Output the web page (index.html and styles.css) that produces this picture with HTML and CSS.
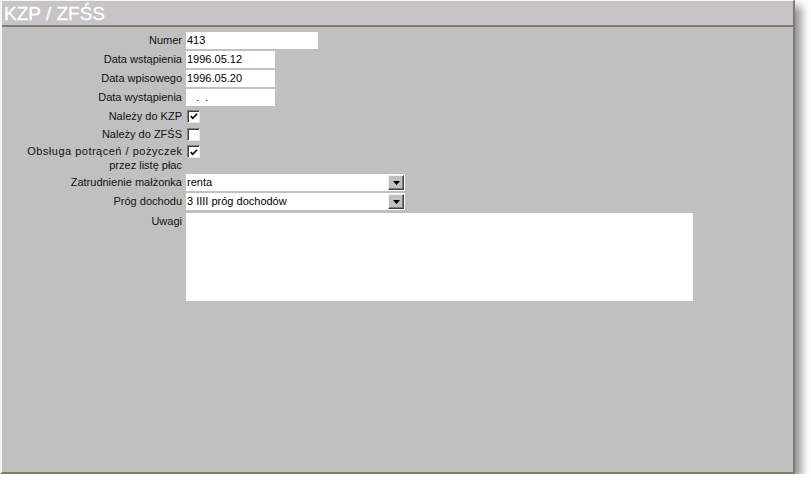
FILE: index.html
```html
<!DOCTYPE html>
<html lang="pl">
<head>
<meta charset="utf-8">
<title>KZP / ZFŚS</title>
<link rel="stylesheet" href="styles.css">
</head>
<body>
<div class="window">
  <div class="titlebar">KZP / ZFŚS</div>
  <div class="form">
    <div class="label">Numer</div>
    <div class="field w-num">413</div>

    <div class="label">Data wstąpienia</div>
    <div class="field w-date">1996.05.12</div>

    <div class="label">Data wpisowego</div>
    <div class="field w-date">1996.05.20</div>

    <div class="label">Data wystąpienia</div>
    <div class="field w-date empty">&nbsp;&nbsp;&nbsp;.&nbsp;&nbsp;.</div>

    <div class="label cb-label">Należy do KZP</div>
    <div class="cb-cell"><span class="cb"><svg viewBox="0 0 11 11" width="11" height="11"><path d="M2 5 L4 7.5 L9 2.5" fill="none" stroke="#000" stroke-width="1.8"/></svg></span></div>

    <div class="label cb-label">Należy do ZFŚS</div>
    <div class="cb-cell"><span class="cb"></span></div>

    <div class="label two"><span class="wide">Obsługa potrąceń / pożyczek</span><br>przez listę płac</div>
    <div class="cb-cell top"><span class="cb"><svg viewBox="0 0 11 11" width="11" height="11"><path d="M2 5 L4 7.5 L9 2.5" fill="none" stroke="#000" stroke-width="1.8"/></svg></span></div>

    <div class="label">Zatrudnienie małżonka</div>
    <div class="field select"><span class="val">renta</span><span class="btn"><svg viewBox="0 0 7 4" width="7" height="4"><path d="M0 0 H7 L3.5 4 Z" fill="#000"/></svg></span></div>

    <div class="label">Próg dochodu</div>
    <div class="field select"><span class="val">3 IIII próg dochodów</span><span class="btn"><svg viewBox="0 0 7 4" width="7" height="4"><path d="M0 0 H7 L3.5 4 Z" fill="#000"/></svg></span></div>

    <div class="label uwagi">Uwagi</div>
    <div class="field memo"></div>
  </div>
</div>
</body>
</html>
```

FILE: styles.css
```css
html, body {
  margin: 0;
  padding: 0;
  background: #ffffff;
}
body {
  font-family: "Liberation Sans", Arial, sans-serif;
  font-size: 11px;
  color: #000;
}
.window {
  width: 791px;
  height: 471px;
  background: #c0c0c0;
  border-left: 2px solid #f4f4f0;
  border-top: 1px solid #f4f4f0;
  border-right: 2px solid #7f7c6e;
  border-bottom: 2px solid #7f7c6e;
  box-shadow: 6px 6px 9px rgba(0, 0, 0, 0.45);
}
.titlebar {
  height: 24px;
  background: #c6c4c6;
  border-bottom: 2px solid #7f7c6e;
  color: #ffffff;
  font-size: 19px;
  line-height: 25px;
  padding-left: 2px;
  -webkit-text-stroke: 0.3px #ffffff;
}
.form {
  display: grid;
  grid-template-columns: 180px 1fr;
  column-gap: 4px;
  row-gap: 2px;
  padding-top: 5px;
  grid-template-rows: 17px 17px 17px 17px 16px 16px 28px 17px 17px 88px;
}
.label {
  text-align: right;
  line-height: 17px;
  white-space: nowrap;
  color: #111;
}
.cb-label {
  line-height: 16px;
}
.label.two {
  line-height: 14px;
}
.wide {
  letter-spacing: 0.5px;
  margin-right: -0.5px;
}
.label.uwagi {
  margin-top: 1px;
}
.field {
  background: #ffffff;
  line-height: 17px;
  padding-left: 1px;
  box-sizing: border-box;
  height: 17px;
}
.w-num { width: 132px; }
.w-date { width: 89px; }
.cb-cell {
  display: flex;
  align-items: center;
  padding-left: 1px;
}
.cb-cell.top {
  align-items: flex-start;
  padding-top: 1px;
}
.cb {
  width: 13px;
  height: 13px;
  box-sizing: border-box;
  background: #ffffff;
  border-top: 1px solid #808080;
  border-left: 1px solid #808080;
  border-right: 1px solid #e8e8e8;
  border-bottom: 1px solid #e8e8e8;
  box-shadow: inset 1px 1px 0 #404040;
  display: flex;
  align-items: center;
  justify-content: center;
}
.cb svg { display: block; margin: 1px 0 0 1px; }
.select {
  width: 219px;
  display: flex;
  align-items: center;
  justify-content: space-between;
  padding-right: 1px;
}
.select .val { line-height: 17px; }
.btn {
  width: 16px;
  height: 15px;
  box-sizing: border-box;
  background: #c0c0c0;
  border-top: 1px solid #f0f0f0;
  border-left: 1px solid #f0f0f0;
  border-right: 1px solid #404040;
  border-bottom: 1px solid #404040;
  box-shadow: inset -1px -1px 0 #808080;
  display: flex;
  align-items: center;
  justify-content: center;
}
.btn svg { display: block; margin-top: 1px; }
.memo {
  width: 507px;
  height: 88px;
  margin-top: 1px;
}
```
